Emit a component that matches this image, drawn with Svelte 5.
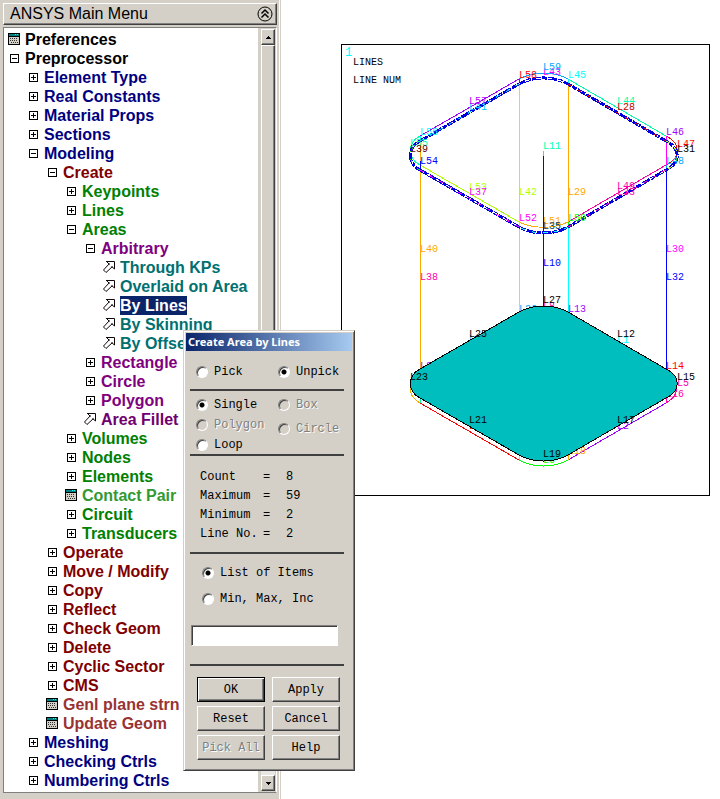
<script lang="ts">
	type Icon = 'plus' | 'minus' | 'form' | 'arrow';
	type Label = [text: string, x: number, y: number, color: string];

	interface Item {
		label: string;
		level: number;
		icon: Icon;
		tone: string;
	}

	const item = (level: number, icon: Icon, tone: string, label: string): Item => ({ label, level, icon, tone });

	const items: Item[] = [
		item(0, 'form', 'black', 'Preferences'),
		item(0, 'minus', 'black', 'Preprocessor'),
		item(1, 'plus', 'navy', 'Element Type'),
		item(1, 'plus', 'navy', 'Real Constants'),
		item(1, 'plus', 'navy', 'Material Props'),
		item(1, 'plus', 'navy', 'Sections'),
		item(1, 'minus', 'navy', 'Modeling'),
		item(2, 'minus', 'maroon', 'Create'),
		item(3, 'plus', 'green', 'Keypoints'),
		item(3, 'plus', 'green', 'Lines'),
		item(3, 'minus', 'green', 'Areas'),
		item(4, 'minus', 'purple', 'Arbitrary'),
		item(5, 'arrow', 'teal', 'Through KPs'),
		item(5, 'arrow', 'teal', 'Overlaid on Area'),
		item(5, 'arrow', 'teal', 'By Lines'),
		item(5, 'arrow', 'teal', 'By Skinning'),
		item(5, 'arrow', 'teal', 'By Offset'),
		item(4, 'plus', 'purple', 'Rectangle'),
		item(4, 'plus', 'purple', 'Circle'),
		item(4, 'plus', 'purple', 'Polygon'),
		item(4, 'arrow', 'plum', 'Area Fillet'),
		item(3, 'plus', 'green', 'Volumes'),
		item(3, 'plus', 'green', 'Nodes'),
		item(3, 'plus', 'green', 'Elements'),
		item(3, 'form', 'leaf', 'Contact Pair'),
		item(3, 'plus', 'green', 'Circuit'),
		item(3, 'plus', 'green', 'Transducers'),
		item(2, 'plus', 'maroon', 'Operate'),
		item(2, 'plus', 'maroon', 'Move / Modify'),
		item(2, 'plus', 'maroon', 'Copy'),
		item(2, 'plus', 'maroon', 'Reflect'),
		item(2, 'plus', 'maroon', 'Check Geom'),
		item(2, 'plus', 'maroon', 'Delete'),
		item(2, 'plus', 'maroon', 'Cyclic Sector'),
		item(2, 'plus', 'maroon', 'CMS'),
		item(2, 'form', 'brick', 'Genl plane strn'),
		item(2, 'form', 'brick', 'Update Geom'),
		item(1, 'plus', 'navy', 'Meshing'),
		item(1, 'plus', 'navy', 'Checking Ctrls'),
		item(1, 'plus', 'navy', 'Numbering Ctrls')
	];

	const counts = [
		['Count', 8],
		['Maximum', 59],
		['Minimum', 2],
		['Line No.', 2]
	];

	// straight edges and fillets of the solid, [path, colour]
	const edges = [
		['M420 136L519 79', '#a000ff'],
		['M519 79C533 71 554 71 568 79', '#00a8ff'],
		['M568 79L666 136', '#00ffa8'],
		['M666 136C681 143 681 158 666 165', '#ff0000'],
		['M666 165L568 222', '#ff00a8'],
		['M568 222C554 229 533 229 519 222', '#ffa800'],
		['M519 222L420 165', '#b0ff00'],
		['M420 165C407 158 407 143 420 136', '#00ffa8'],
		['M420 136V141', '#00ffff'],
		['M420 141V161', '#ffa800'],
		['M420 161V170', '#0000ff'],
		['M420 170V369', '#ffa800'],
		['M519 79V84', '#ff0000'],
		['M519 84V312', '#b0ff00'],
		['M568 79V84', '#00ffff'],
		['M568 84V222', '#ffa800'],
		['M568 222V227', '#00ff00'],
		['M568 227V312', '#00ffff'],
		['M666 136V165', '#ff00ff'],
		['M666 165V170', '#00a8ff'],
		['M666 170V369', '#0000ff'],
		['M543 151V156', '#00ffa8'],
		['M543 156V306', '#0000ff'],
		['M410 384C410 394 412 398 420 403', '#ffa800'],
		['M420 403L519 460', '#ff0000'],
		['M519 460C533 468 554 468 568 460', '#00ff00'],
		['M568 460L666 403', '#a000ff'],
		['M666 403C674 398 677 394 677 386', '#ff00a8'],
		['M420 396V403', '#00ffa8'],
		['M519 454V460', '#b0ff00'],
		['M568 454V460', '#ffa800'],
		['M666 397V403', '#ff00a8']
	];

	const picked =
		'M420 141L519 84C533 76 554 76 568 84L666 141C681 148 681 163 666 170L568 227C554 235 533 235 519 227L420 170C407 163 407 148 420 141Z';
	const area =
		'M420 369L519 312C533 304 554 304 568 312L666 369C681 376 681 391 666 398L568 455C554 463 533 463 519 455L420 398C407 391 407 376 420 369Z';

	// own colours of the picked lines, showing through the highlight
	const pickedEdges = [
		['M420 141L519 84', '#00c8ff'],
		['M568 84L666 141', '#e00000'],
		['M666 141C681 148 681 163 666 170', '#b0ff00'],
		['M666 170L568 227', '#ff00a8'],
		['M568 227C554 235 533 235 519 227', '#00ffff'],
		['M519 227L420 170', '#ff00ff'],
		['M420 170C407 163 407 148 420 141', '#00ff00']
	];

	const backLabels: Label[] = [
		['L43', 543, 75, '#ff00ff'],
		['L59', 543, 70, '#00a8ff'],
		['L58', 519, 78, '#ff0000'],
		['L45', 568, 78, '#00ffff'],
		['L44', 617, 104, '#00ffa8'],
		['L28', 617, 110, '#c00000'],
		['L41', 469, 110, '#00c8ff'],
		['L57', 469, 104, '#c000ff'],
		['L56', 420, 135, '#00ffff'],
		['L55', 410, 146, '#00ffa8'],
		['L39', 410, 152, '#600000'],
		['L54', 420, 164, '#0000ff'],
		['L46', 666, 135, '#a000ff'],
		['L47', 677, 147, '#ff0000'],
		['L31', 677, 152, '#000000'],
		['L48', 666, 164, '#00a8ff'],
		['L53', 469, 190, '#b0ff00'],
		['L37', 469, 195, '#ff00ff'],
		['L49', 617, 189, '#ff00a8'],
		['L33', 617, 195, '#ff00a8'],
		['L42', 519, 195, '#b0ff00'],
		['L29', 568, 195, '#ffa800'],
		['L52', 519, 221, '#ff00ff'],
		['L50', 568, 221, '#00ff00'],
		['L51', 543, 224, '#ffa800'],
		['L35', 543, 229, '#004060'],
		['L11', 543, 149, '#00ffa8'],
		['L40', 420, 252, '#ffa800'],
		['L38', 420, 280, '#ff00a8'],
		['L30', 666, 252, '#ff00ff'],
		['L32', 666, 280, '#0000ff'],
		['L10', 543, 266, '#0000ff'],
		['L26', 519, 312, '#00a8ff'],
		['L8', 543, 309, '#ff00a8'],
		['L13', 568, 312, '#a000ff'],
		['L3', 469, 342, '#00a8ff'],
		['L1', 617, 343, '#00ffff'],
		['L24', 420, 369, '#a000ff'],
		['L14', 666, 369, '#ff0000'],
		['L5', 677, 386, '#ff00a8'],
		['L16', 666, 397, '#ff00a8'],
		['L4', 469, 429, '#ff0000'],
		['L2', 617, 429, '#a000ff'],
		['L18', 568, 454, '#ffa800'],
		['L6', 543, 463, '#00ff00']
	];

	const frontLabels: Label[] = [
		['L27', 543, 303, '#000'],
		['L25', 469, 337, '#000'],
		['L12', 617, 337, '#000'],
		['L15', 677, 380, '#000'],
		['L23', 410, 380, '#000'],
		['L21', 469, 423, '#000'],
		['L17', 617, 423, '#000'],
		['L19', 543, 457, '#000']
	];

	let selected = $state('By Lines');
	let mode = $state('Unpick');
	let shape = $state('Single');
	let entry = $state('list');
	let value = $state('');
</script>

{#snippet glyph(icon: Icon)}
	{#if icon === 'form'}
		<svg width="13" height="13" viewBox="0 0 13 13" shape-rendering="crispEdges" aria-hidden="true">
			<path d="M0 0H12V12H0Z" fill="#000" />
			<path d="M1 1H11V3H1Z" fill="#008080" />
			<path d="M7 1H8V2H7ZM9 1H10V2H9Z" fill="#00ffff" />
			<path d="M1 4H11V11H1Z" fill="#d4d0c8" />
			<path d="M2 5.5H10M2 7.5H10M3 9.5H11" stroke="#303030" stroke-dasharray="1 1" />
		</svg>
	{:else if icon === 'arrow'}
		<svg width="13" height="13" viewBox="0 0 13 13" aria-hidden="true">
			<path d="M3.5 .5H11.5V8.5L9 6L3 11.5L.5 9L6 3Z" fill="#fff" />
			<path
				d="M3 .5H11.5V8M9.5 5.5L3 11.5M6.5 2.5L.5 9M.5 9L3 11.5M3.5 .5L6.5 3.5M11.5 8L8.5 5.5"
				fill="none"
				stroke="#100808"
			/>
		</svg>
	{:else}
		<svg width="9" height="9" viewBox="0 0 9 9" shape-rendering="crispEdges" aria-hidden="true">
			<path d="M.5 .5H8.5V8.5H.5Z" fill="#fff" stroke="#000" />
			<path d={icon === 'plus' ? 'M2 4.5H7M4.5 2V7' : 'M2 4.5H7'} stroke="#000" />
		</svg>
	{/if}
{/snippet}

{#snippet labels(list: Label[])}
	{#each list as [text, x, y, color]}
		<text {x} {y} fill={color}>{text}</text>
	{/each}
{/snippet}

<div class="workspace">
	<aside class="sidebar">
		<header class="menu-title">
			<h1>ANSYS Main Menu</h1>
			<button class="collapse" aria-label="Collapse menu">
				<svg width="16" height="16" viewBox="0 0 16 16" fill="none" stroke="#000" aria-hidden="true">
					<circle cx="8" cy="8" r="7" />
					<path d="M4.5 7.5L8 4L11.5 7.5M4.5 11.5L8 8L11.5 11.5" stroke-width="1.5" />
				</svg>
			</button>
		</header>
		<div class="tree-box">
			<ul class="tree">
				{#each items as entryItem}
					<li style="padding-left: {entryItem.level * 19}px">
						<button
							class="node {entryItem.tone}"
							class:selected={selected === entryItem.label}
							onclick={() => (selected = entryItem.label)}
						>
							<span class="icon">{@render glyph(entryItem.icon)}</span>
							<span class="label">{entryItem.label}</span>
						</button>
					</li>
				{/each}
			</ul>
			<div class="scrollbar">
				<button class="raised step" aria-label="Scroll up">
					<svg width="5" height="3" viewBox="0 0 5 3" shape-rendering="crispEdges"><path d="M0 3L2.5 0L5 3Z" /></svg>
				</button>
				<div class="raised thumb"></div>
				<div class="track"></div>
				<button class="raised step" aria-label="Scroll down">
					<svg width="5" height="3" viewBox="0 0 5 3" shape-rendering="crispEdges"><path d="M0 0H5L2.5 3Z" /></svg>
				</button>
			</div>
		</div>
	</aside>

	<main class="graphics">
		<svg class="plot" viewBox="342 45 367 450" role="img" aria-label="Line plot">
			<text class="window-no" x="345" y="56" fill="#00ffff">1</text>
			<text x="353" y="65">LINES</text>
			<text x="353" y="83">LINE NUM</text>
			<g fill="none" shape-rendering="crispEdges">
				{#each edges as [d, color]}
					<path {d} stroke={color} />
				{/each}
				<path d={picked} stroke="#0000e0" stroke-width="3" stroke-dasharray="9 1 5 1" />
				<path d={picked} stroke="#fff" stroke-dasharray="5 6" />
				{#each pickedEdges as [d, color]}
					<path {d} stroke={color} stroke-dasharray="4 7" />
				{/each}
			</g>
			{@render labels(backLabels)}
			<path d={area} fill="#00bebe" stroke="#000" shape-rendering="crispEdges" />
			{@render labels(frontLabels)}
		</svg>
	</main>

	<form class="dialog" onsubmit={(e) => e.preventDefault()}>
		<h2>Create Area by Lines</h2>
		<div class="body">
			<div class="group modes">
				<label><input type="radio" name="mode" value="Pick" bind:group={mode} />Pick</label>
				<label><input type="radio" name="mode" value="Unpick" bind:group={mode} />Unpick</label>
			</div>
			<hr />
			<div class="group shapes">
				<div class="left">
					<label><input type="radio" name="shape" value="Single" bind:group={shape} />Single</label>
					<label class="off"><input type="radio" name="shape" value="Polygon" bind:group={shape} disabled />Polygon</label>
					<label><input type="radio" name="shape" value="Loop" bind:group={shape} />Loop</label>
				</div>
				<div class="right">
					<label class="off"><input type="radio" name="shape" value="Box" bind:group={shape} disabled />Box</label>
					<label class="off"><input type="radio" name="shape" value="Circle" bind:group={shape} disabled />Circle</label>
				</div>
			</div>
			<hr />
			<table>
				<tbody>
					{#each counts as [name, count]}
						<tr><th scope="row">{name}</th><td class="eq">=</td><td>{count}</td></tr>
					{/each}
				</tbody>
			</table>
			<hr />
			<div class="entry">
				<label><input type="radio" name="entry" value="list" bind:group={entry} />List of Items</label>
				<label><input type="radio" name="entry" value="range" bind:group={entry} />Min, Max, Inc</label>
			</div>
			<input class="value" type="text" aria-label="Items" bind:value />
			<hr />
			<div class="buttons">
				<button class="default" type="submit">OK</button>
				<button type="button">Apply</button>
				<button type="button">Reset</button>
				<button type="button">Cancel</button>
				<button type="button" disabled>Pick All</button>
				<button type="button">Help</button>
			</div>
		</div>
	</form>
</div>

<style>
	:global(body) {
		background: #fff;
	}

	.workspace {
		position: relative;
		display: grid;
		grid-template-columns: 281px 1fr;
		min-height: 100vh;
		font-family: 'Liberation Sans', Arial, sans-serif;
		color: #000;
	}

	.workspace * {
		box-sizing: border-box;
	}

	button {
		font: inherit;
		color: inherit;
		cursor: pointer;
	}

	.sidebar {
		display: flex;
		flex-direction: column;
		gap: 2px;
		padding: 3px 3px 6px;
		background: #d4d0c8;
		border-right: 1px solid #d4d0c8;
		box-shadow: inset -1px 0 #fff;
	}

	.menu-title {
		display: flex;
		align-items: center;
		justify-content: space-between;
		height: 22px;
		padding: 0 3px 0 6px;
		border: 1px solid;
		border-color: #fff #404040 #404040 #fff;
		box-shadow: inset -1px -1px #808080;
	}

	h1 {
		margin: 0;
		font-size: 16px;
		line-height: 20px;
		font-weight: 400;
	}

	.collapse {
		display: flex;
		padding: 0;
		border: 0;
		background: none;
	}

	.tree-box {
		display: flex;
		flex: 1;
		border: 1px solid;
		border-color: #808080 #fff #808080 #808080;
		background: #fff;
	}

	.tree {
		flex: 1;
		min-width: 0;
		margin: 0;
		padding: 2px 0 0;
		list-style: none;
	}

	.node {
		display: flex;
		align-items: center;
		padding: 0;
		border: 0;
		background: none;
		font-size: 16px;
		line-height: 19px;
		font-weight: 700;
		white-space: nowrap;
	}

	.icon {
		display: flex;
		justify-content: center;
		width: 21px;
	}

	.black { color: #000; }
	.navy { color: #000080; }
	.maroon { color: #800000; }
	.green { color: #008000; }
	.purple { color: #800080; }
	.plum { color: #700070; }
	.teal { color: #007070; }
	.leaf { color: #339933; }
	.brick { color: #993333; }

	.selected .label {
		background: #0a246a;
		color: #fff;
	}

	.scrollbar {
		display: flex;
		flex-direction: column;
		width: 18px;
		padding: 1px 1px 1px 3px;
		background: #d4d0c8;
	}

	.raised {
		border: 1px solid;
		border-color: #fff #404040 #404040 #fff;
		background: #d4d0c8;
		box-shadow: inset -1px -1px #808080;
	}

	.step {
		display: flex;
		align-items: center;
		justify-content: center;
		height: 16px;
		padding: 0;
	}

	.thumb {
		flex: 1;
	}

	.track {
		height: 8px;
		background: #e9e7e3;
	}

	.graphics {
		padding: 44px 10px 0 60px;
	}

	.plot {
		display: block;
		width: 100%;
		border: 1px solid #000;
		font-family: 'Liberation Mono', 'Courier New', monospace;
		font-size: 10px;
	}

	.window-no {
		font-size: 12px;
	}

	/* floating picker window */
	.dialog {
		position: absolute;
		top: 330px;
		left: 183px;
		width: 172px;
		padding: 2px 2px 10px;
		border: 1px solid;
		border-color: #d4d0c8 #404040 #404040 #d4d0c8;
		box-shadow: inset 1px 1px #fff, inset -1px -1px #808080;
		background: #d4d0c8;
		font-family: 'Liberation Mono', 'Courier New', monospace;
		font-size: 12px;
		line-height: 12px;
	}

	h2 {
		margin: 0;
		padding-left: 2px;
		background: linear-gradient(90deg, #0a246a, #a6caf0);
		color: #fff;
		font-family: 'Noto Sans', Tahoma, sans-serif;
		font-size: 11px;
		line-height: 18px;
		font-weight: 700;
		white-space: nowrap;
	}

	.body {
		padding: 0 8px 0 4px;
	}

	hr {
		height: 2px;
		margin: 0;
		border: 0;
		background: #404040;
	}

	.group {
		display: grid;
		grid-template-columns: 82px 1fr;
		padding-left: 6px;
	}

	.modes {
		padding-top: 15px;
		padding-bottom: 11px;
	}

	.shapes {
		padding-top: 8px;
		padding-bottom: 3px;
	}

	.left,
	.right {
		display: flex;
		flex-direction: column;
		gap: 8px;
	}

	.right {
		gap: 12px;
	}

	label {
		display: flex;
		align-items: center;
		gap: 6px;
		white-space: nowrap;
	}

	input[type='radio'] {
		appearance: none;
		flex: none;
		width: 12px;
		height: 12px;
		margin: 0;
		border: 1px solid;
		border-color: #808080 #fff #fff #808080;
		border-radius: 50%;
		background: #fff;
		box-shadow: inset 1px 1px #404040;
	}

	input[type='radio']:checked {
		background: radial-gradient(circle, #000 2px, #fff 3px);
	}

	input[type='radio']:disabled {
		background: #d4d0c8;
	}

	.off,
	button:disabled {
		color: #808080;
		text-shadow: 1px 1px #fff;
	}

	table {
		margin: 12px 0 8px 10px;
		border-collapse: collapse;
		line-height: 19px;
	}

	th,
	td {
		padding: 0;
		font-weight: 400;
		text-align: left;
	}

	th {
		width: 63px;
	}

	.eq {
		width: 23px;
	}

	.entry {
		display: grid;
		gap: 14px;
		padding: 13px 0 20px 12px;
	}

	.value {
		display: block;
		width: 147px;
		height: 21px;
		margin: 0 0 18px 1px;
		padding: 0 3px;
		border: 1px solid;
		border-color: #808080 #fff #fff #808080;
		box-shadow: inset 1px 1px #404040;
		background: #fff;
		font: inherit;
	}

	.buttons {
		display: grid;
		grid-template-columns: 68px 68px;
		grid-auto-rows: 25px;
		gap: 4px 7px;
		padding: 11px 0 0 7px;
	}

	.buttons button {
		padding: 0;
		border: 1px solid;
		border-color: #fff #404040 #404040 #fff;
		box-shadow: inset -1px -1px #808080;
		background: #d4d0c8;
	}

	.buttons .default {
		border-color: #000;
		box-shadow: inset 1px 1px #fff, inset -1px -1px #404040, inset -2px -2px #808080;
	}
</style>
